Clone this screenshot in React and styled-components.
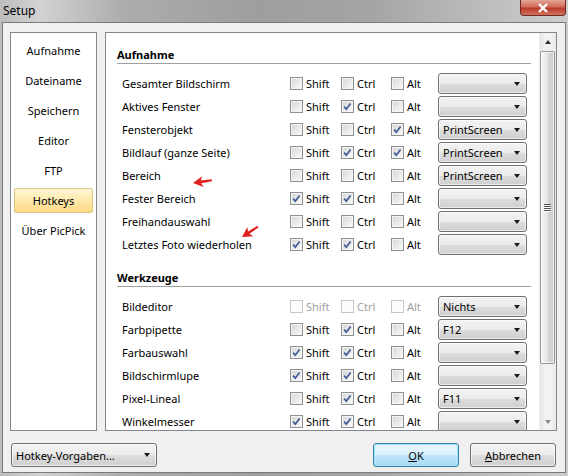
import React from 'react';
import styled, { createGlobalStyle } from 'styled-components';

const GlobalStyle = createGlobalStyle`
  html, body {
    margin: 0;
    padding: 0;
  }
  body {
    font-family: "Noto Sans", "Open Sans", sans-serif;
    font-size: 11px;
    color: #000;
  }
`;

// Window chrome
const Window = styled.div`
  position: relative;
  width: 568px;
  height: 476px;
  display: flex;
  flex-direction: column;
  overflow: hidden;
  background: linear-gradient(
    to right,
    #bdbdbd 0%,
    #d2d2d2 7%,
    #acacac 22%,
    #9e9e9e 45%,
    #a4a4a4 65%,
    #bcbcbc 85%,
    #cdcdcd 100%
  );
`;

const TitleBar = styled.div`
  height: 23px;
  display: flex;
  align-items: flex-start;
  justify-content: space-between;
  padding-left: 3px;
`;

const Title = styled.span`
  font-size: 12px;
  line-height: 21px;
`;

const CloseButton = styled.div`
  width: 46px;
  height: 16px;
  margin-right: 2px;
  box-sizing: border-box;
  border: 1px solid #6e2a22;
  border-top: none;
  border-radius: 0 0 4px 4px;
  background: linear-gradient(#e4a596 0%, #d06a58 45%, #bb3b29 55%, #d2715f 100%);
  display: flex;
  align-items: center;
  justify-content: center;
`;

const Frame = styled.div`
  flex: 1;
  margin: 0 2px 3px 2px;
  border: 1px solid #7a7a7a;
  background: #f0f0f0;
  padding: 9px 8px 5px 7px;
  display: flex;
  flex-direction: column;
`;

const Main = styled.div`
  height: 399px;
  display: flex;
  gap: 8px;
`;

// Left navigation list
const Nav = styled.div`
  width: 87px;
  box-sizing: border-box;
  border: 1px solid #828790;
  background: #fff;
  padding: 5px 3px;
`;

const NavItem = styled.div`
  height: 25px;
  line-height: 24px;
  margin-bottom: 5px;
  box-sizing: border-box;
  text-align: center;
  border: 1px solid ${(p) => (p.$active ? '#dcc48a' : 'transparent')};
  border-radius: 2px;
  background: ${(p) =>
    p.$active ? 'linear-gradient(#fff6d9 0%, #fde9ab 50%, #fbd984 100%)' : 'transparent'};
`;

// Right settings panel
const Panel = styled.div`
  flex: 1;
  display: flex;
  border: 1px solid #828790;
  background: #fff;
  overflow: hidden;
`;

const Content = styled.div`
  flex: 1;
  padding: 14px 0 0 11px;
  overflow: hidden;
`;

const SectionHeading = styled.div`
  font-weight: bold;
  line-height: 16px;
  border-bottom: 1px solid #a0a0a0;
  margin: ${(p) => (p.$first ? '0' : '14px')} 8px 8px 0;
`;

const Row = styled.div`
  height: 23px;
  padding-left: 5px;
  display: grid;
  grid-template-columns: 168px 51px 50px 47px 89px;
  align-items: center;
`;

const Check = styled.label`
  display: flex;
  align-items: center;
  gap: 3px;
  color: ${(p) => (p.$disabled ? '#a0a0a0' : '#000')};
`;

const Box = styled.span`
  position: relative;
  width: 13px;
  height: 13px;
  box-sizing: border-box;
  border: 1px solid ${(p) => (p.$disabled ? '#c6c6c6' : '#8e8f8f')};
  background: ${(p) =>
    p.$disabled ? '#fbfbfb' : 'linear-gradient(135deg, #d4d4d4 0%, #eaeaea 55%, #fbfbfb 100%)'};
  box-shadow: inset 0 0 0 1px ${(p) => (p.$disabled ? '#fff' : '#f4f4f4')};
  svg {
    position: absolute;
    left: 0;
    top: 0;
  }
`;

const Dropdown = styled.div`
  width: ${(p) => p.$width || 89}px;
  height: ${(p) => p.$height || 21}px;
  box-sizing: border-box;
  display: flex;
  align-items: center;
  padding: 0 6px 0 4px;
  border: 1px solid #707070;
  border-radius: 3px;
  background: linear-gradient(#f3f3f3 0%, #ebebeb 50%, #dddddd 51%, #cfcfcf 100%);
  box-shadow: inset 0 0 0 1px rgba(255, 255, 255, 0.6);
`;

const Caret = styled.span`
  margin-left: auto;
  width: 0;
  height: 0;
  border-left: 3.5px solid transparent;
  border-right: 3.5px solid transparent;
  border-top: 4px solid #1a1a1a;
`;

// Vertical scrollbar
const Scrollbar = styled.div`
  width: 16px;
  display: flex;
  flex-direction: column;
  background: linear-gradient(to right, #e4e4e4, #f2f2f2 30%, #f2f2f2 70%, #e8e8e8);
  border-left: 1px solid #efefef;
`;

const ScrollArrow = styled.div`
  height: 17px;
  display: flex;
  align-items: center;
  justify-content: center;
  &::after {
    content: '';
    border-left: 3.5px solid transparent;
    border-right: 3.5px solid transparent;
    ${(p) => (p.$down ? 'border-top' : 'border-bottom')}: 4px solid ${(p) =>
      p.$down ? '#8a8a8a' : '#303030'};
  }
`;

const Thumb = styled.div`
  height: 313px;
  margin: 1px 1px 0 0;
  box-sizing: border-box;
  border: 1px solid #959595;
  border-radius: 2px;
  background: linear-gradient(to right, #f5f5f5 0%, #e9e9e9 45%, #d6d6d6 55%, #cdcdcd 100%);
  box-shadow: inset 0 0 0 1px rgba(255, 255, 255, 0.7);
  display: flex;
  flex-direction: column;
  align-items: center;
  justify-content: center;
  gap: 1px;
`;

const Grip = styled.span`
  width: 7px;
  height: 1px;
  background: #555;
  box-shadow: 0 1px 0 #fff;
`;

const TrackFill = styled.div`
  flex: 1;
`;

// Footer buttons
const Footer = styled.div`
  margin-top: 12px;
  display: flex;
  align-items: center;
  padding-left: 1px;
`;

const Button = styled.div`
  width: 86px;
  height: 24px;
  box-sizing: border-box;
  display: flex;
  align-items: center;
  justify-content: center;
  border: 1px solid ${(p) => (p.$default ? '#3c7fb1' : '#707070')};
  border-radius: 3px;
  background: ${(p) =>
    p.$default
      ? 'linear-gradient(#eaf6fd 0%, #d9f0fc 50%, #bee6fd 51%, #a7d9f5 100%)'
      : 'linear-gradient(#f3f3f3 0%, #ebebeb 50%, #dddddd 51%, #cfcfcf 100%)'};
  box-shadow: inset 0 0 0 1px ${(p) => (p.$default ? '#9ee4fb' : 'rgba(255,255,255,0.6)')};
  margin-left: ${(p) => p.$gap || 0}px;
  u {
    text-decoration: underline;
  }
`;

const Overlay = styled.svg`
  position: absolute;
  left: 0;
  top: 0;
  pointer-events: none;
`;

const capture = [
  ['Gesamter Bildschirm', [0, 0, 0], ''],
  ['Aktives Fenster', [0, 1, 0], ''],
  ['Fensterobjekt', [0, 0, 1], 'PrintScreen'],
  ['Bildlauf (ganze Seite)', [0, 1, 1], 'PrintScreen'],
  ['Bereich', [0, 0, 0], 'PrintScreen'],
  ['Fester Bereich', [1, 1, 0], ''],
  ['Freihandauswahl', [0, 0, 0], ''],
  ['Letztes Foto wiederholen', [1, 1, 0], ''],
];

const tools = [
  ['Bildeditor', [0, 0, 0], 'Nichts', true],
  ['Farbpipette', [0, 1, 0], 'F12'],
  ['Farbauswahl', [1, 1, 0], ''],
  ['Bildschirmlupe', [1, 1, 0], ''],
  ['Pixel-Lineal', [0, 1, 0], 'F11'],
  ['Winkelmesser', [1, 1, 0], ''],
];

const navItems = ['Aufnahme', 'Dateiname', 'Speichern', 'Editor', 'FTP', 'Hotkeys', 'Über PicPick'];

function CheckBox({ checked, disabled, label }) {
  return (
    <Check $disabled={disabled}>
      <Box $disabled={disabled}>
        {checked ? (
          <svg width="11" height="11" viewBox="0 0 11 11">
            <path d="M2.2 5.6 L4.3 8.2 L8.6 2.4" fill="none" stroke="#3f5a97" strokeWidth="1.7" />
          </svg>
        ) : null}
      </Box>
      {label}
    </Check>
  );
}

function HotkeyRow({ name, keys, value, disabled }) {
  return (
    <Row>
      <span>{name}</span>
      <CheckBox label="Shift" checked={keys[0]} disabled={disabled} />
      <CheckBox label="Ctrl" checked={keys[1]} disabled={disabled} />
      <CheckBox label="Alt" checked={keys[2]} disabled={disabled} />
      <Dropdown>
        <span>{value}</span>
        <Caret />
      </Dropdown>
    </Row>
  );
}

// red annotation arrow, tip at origin pointing left
function RedArrow({ x, y, angle }) {
  return (
    <g transform={`translate(${x} ${y}) rotate(${angle})`} fill="#e0201c">
      <path d="M0 0 L10 -5.5 L8 -1.3 L19 -1 L19 1 L8 1.3 L10 5.5 Z" />
    </g>
  );
}

export default function App() {
  return (
    <Window>
      <GlobalStyle />
      <TitleBar>
        <Title>Setup</Title>
        <CloseButton>
          <svg width="12" height="10" viewBox="0 0 12 10">
            <path d="M2 1 L10 9 M10 1 L2 9" stroke="#fff" strokeWidth="2.4" />
          </svg>
        </CloseButton>
      </TitleBar>
      <Frame>
        <Main>
          <Nav>
            {navItems.map((item) => (
              <NavItem key={item} $active={item === 'Hotkeys'}>
                {item}
              </NavItem>
            ))}
          </Nav>
          <Panel>
            <Content>
              <SectionHeading $first>Aufnahme</SectionHeading>
              {capture.map(([name, keys, value]) => (
                <HotkeyRow key={name} name={name} keys={keys} value={value} />
              ))}
              <SectionHeading>Werkzeuge</SectionHeading>
              {tools.map(([name, keys, value, disabled]) => (
                <HotkeyRow key={name} name={name} keys={keys} value={value} disabled={disabled} />
              ))}
            </Content>
            <Scrollbar>
              <ScrollArrow />
              <Thumb>
                <Grip />
                <Grip />
                <Grip />
                <Grip />
              </Thumb>
              <TrackFill />
              <ScrollArrow $down />
            </Scrollbar>
          </Panel>
        </Main>
        <Footer>
          <Dropdown $width={146} $height={24}>
            <span>Hotkey-Vorgaben...</span>
            <Caret />
          </Dropdown>
          <Button $default $gap={216}>
            <span>
              <u>O</u>K
            </span>
          </Button>
          <Button $gap={11}>
            <span>
              <u>A</u>bbrechen
            </span>
          </Button>
        </Footer>
      </Frame>
      <Overlay width="568" height="476">
        <RedArrow x={193} y={183} angle={-8} />
        <RedArrow x={242} y={237} angle={-33} />
      </Overlay>
    </Window>
  );
}
